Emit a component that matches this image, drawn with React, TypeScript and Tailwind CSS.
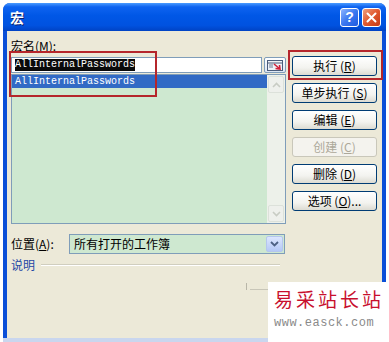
import React from "react";

const cjk = { fontFamily: '"Noto Sans CJK SC", "Liberation Sans", sans-serif' };
const mono = { fontFamily: '"Liberation Mono", monospace' };

function Btn({ label, k, rest, disabled }: { label: string; k: string; rest?: string; disabled?: boolean }) {
  return (
    <div
      className={
        "h-[20px] w-[85px] rounded-[3px] border flex items-center justify-center text-[12px] leading-none " +
        (disabled
          ? "border-[#C9C7BA] bg-[#F4F3EE] text-[#ACA899]"
          : "border-[#003C74] bg-[linear-gradient(180deg,#FFFFFF_0%,#F3F3EF_60%,#DCDBD2_100%)] text-black")
      }
      style={cjk}
    >
      <span>
        {label} ({<span className="underline">{k}</span>}){rest}
      </span>
    </div>
  );
}

export default function App() {
  return (
    <div className="relative w-[389px] h-[342px] bg-white overflow-hidden">
      <div className="ml-[3px] mt-[3px] w-[383px] h-[342px] rounded-t-[7px] bg-[#0A4FD8] flex flex-col">
        {/* Title bar */}
        <div className="h-[28px] shrink-0 rounded-t-[7px] bg-[linear-gradient(180deg,#4A9BFF_0%,#0E63F0_14%,#0057E6_45%,#0052E0_80%,#0043C4_100%)] flex items-center pl-[7px] pr-[5px]">
          <span className="text-white font-bold text-[14px] [text-shadow:1px_1px_0_#0A1F6E]" style={cjk}>宏</span>
          <div className="ml-auto flex gap-[3px]">
            <div className="w-[19px] h-[19px] rounded-[3px] border border-white bg-[linear-gradient(135deg,#8DB5FF_0%,#3B78F0_50%,#1F5AE0_100%)] flex items-center justify-center text-white font-bold text-[14px] leading-none" style={{ fontFamily: '"Liberation Sans", sans-serif' }}>?</div>
            <div className="w-[19px] h-[19px] rounded-[3px] border border-white bg-[linear-gradient(135deg,#F0A080_0%,#E0582E_50%,#C43A16_100%)] flex items-center justify-center">
              <svg width="11" height="11" viewBox="0 0 11 11">
                <path d="M1.5 1.5 L9.5 9.5 M9.5 1.5 L1.5 9.5" stroke="white" strokeWidth="2" strokeLinecap="round" />
              </svg>
            </div>
          </div>
        </div>
        {/* Client */}
        <div className="mx-[4px] flex-1 bg-[#ECE9D8] pl-[4px] pr-[4px] pt-[7px] flex flex-col">
          <div className="text-[12px] leading-[15px] text-black" style={cjk}>
            宏名(<span className="underline">M</span>):
          </div>
          <div className="flex gap-[6px] mt-[2px]">
            {/* left column */}
            <div className="w-[275px] flex flex-col">
              <div className="flex items-center gap-[2px] mt-[2px]">
                <div className="h-[16px] w-[251px] border border-[#7F9DB9] bg-white flex items-center pl-[3px]">
                  <span className="bg-[#0A0A0A] text-white text-[10px] leading-[12px]" style={mono}>AllInternalPasswords</span>
                </div>
                <div className="h-[16px] w-[22px] border border-[#7F9DB9] rounded-[2px] bg-[linear-gradient(180deg,#FFFFFF,#DCE6F4)] flex items-center justify-center">
                  <svg width="16" height="11" viewBox="0 0 16 11">
                    <rect x="0.5" y="0.5" width="15" height="10" fill="#EEF2F8" stroke="#4B5C7A" />
                    <line x1="0.5" y1="3" x2="15.5" y2="3" stroke="#4B5C7A" />
                    <line x1="2" y1="5" x2="6" y2="5" stroke="#6A7A96" />
                    <line x1="2" y1="7" x2="6" y2="7" stroke="#6A7A96" />
                    <path d="M7 4 L13 9 M8.5 8.5 L13 9 L12.5 5" stroke="#D0203A" strokeWidth="1.6" fill="none" />
                  </svg>
                </div>
              </div>
              <div className="mt-[1px] h-[150px] border border-[#7F9DB9] bg-[#CEE8D0] flex">
                <div className="flex-1">
                  <div className="h-[13px] bg-[#316AC5] flex items-center pl-[3px]">
                    <span className="text-white text-[10px] leading-[12px]" style={mono}>AllInternalPasswords</span>
                  </div>
                </div>
                <div className="w-[18px] bg-[#EDF1EA] flex flex-col justify-between p-[1px]">
                  <div className="h-[17px] rounded-[2px] bg-[#EEF0EC] border border-[#DCE1DA] flex items-center justify-center">
                    <svg width="9" height="6" viewBox="0 0 9 6"><path d="M1 5 L4.5 1.5 L8 5" stroke="#C8CCC4" strokeWidth="1.6" fill="none" /></svg>
                  </div>
                  <div className="h-[17px] rounded-[2px] bg-[#EEF0EC] border border-[#DCE1DA] flex items-center justify-center">
                    <svg width="9" height="6" viewBox="0 0 9 6"><path d="M1 1 L4.5 4.5 L8 1" stroke="#C8CCC4" strokeWidth="1.6" fill="none" /></svg>
                  </div>
                </div>
              </div>
            </div>
            {/* right column buttons */}
            <div className="flex flex-col gap-[7px] pt-[1px]">
              <Btn label="执行" k="R" />
              <Btn label="单步执行" k="S" />
              <Btn label="编辑" k="E" />
              <Btn label="创建" k="C" disabled />
              <Btn label="删除" k="D" />
              <Btn label="选项" k="O" rest="..." />
            </div>
          </div>
          {/* location row */}
          <div className="flex items-center mt-[10px]">
            <div className="w-[58px] text-[12px] leading-none text-black" style={cjk}>
              位置(<span className="underline">A</span>):
            </div>
            <div className="h-[20px] w-[216px] border border-[#7F9DB9] bg-[#CEE8D0] flex items-center">
              <span className="pl-[4px] text-[12px] text-black flex-1" style={cjk}>所有打开的工作簿</span>
              <div className="w-[17px] h-[16px] mr-[1px] rounded-[2px] bg-[linear-gradient(180deg,#DCE6FE,#B4C8F6)] border border-[#B4C6EE] flex items-center justify-center">
                <svg width="9" height="6" viewBox="0 0 9 6"><path d="M1 1 L4.5 4.5 L8 1" stroke="#4D6185" strokeWidth="1.8" fill="none" /></svg>
              </div>
            </div>
          </div>
          <div className="flex items-center mt-[3px]">
            <span className="text-[12px] leading-[15px] text-[#1E47A6]" style={cjk}>说明</span>
            <div className="ml-[6px] w-[239px] h-[2px] border-t border-[#D0CEBF] border-b border-b-white" />
          </div>
          <div className="flex-1" />
        </div>
      </div>

      {/* red highlight boxes */}
      <div className="absolute left-[9px] top-[51px] w-[148px] h-[46px] border-2 border-[#B5262B]" />
      <div className="absolute left-[288px] top-[50px] w-[95px] h-[30px] border-2 border-[#B5262B]" />

      {/* small mark in description area */}
      <div className="absolute left-[246px] top-[283px] w-[1px] h-[7px] bg-[#B8B6A8]" />
      <div className="absolute left-[250px] top-[289px] w-[18px] h-[1px] bg-[#C8C6B8]" />

      {/* bottom border */}
      <div className="absolute left-[3px] bottom-0 w-[383px] h-[4px] bg-[#C9D6EE]" />

      {/* watermark */}
      <div className="absolute left-[268px] top-[282px] w-[121px] h-[60px] bg-white flex flex-col pl-[6px] pt-[6px]">
        <span className="text-[#C8102E] text-[19px] leading-[22px] tracking-[3px]" style={{ fontFamily: '"Noto Sans CJK SC", serif' }}>易采站长站</span>
        <span className="mt-[6px] text-[#8A8A8A] text-[12px] leading-[14px] tracking-[0.5px]" style={mono}>www.easck.com</span>
      </div>
    </div>
  );
}
